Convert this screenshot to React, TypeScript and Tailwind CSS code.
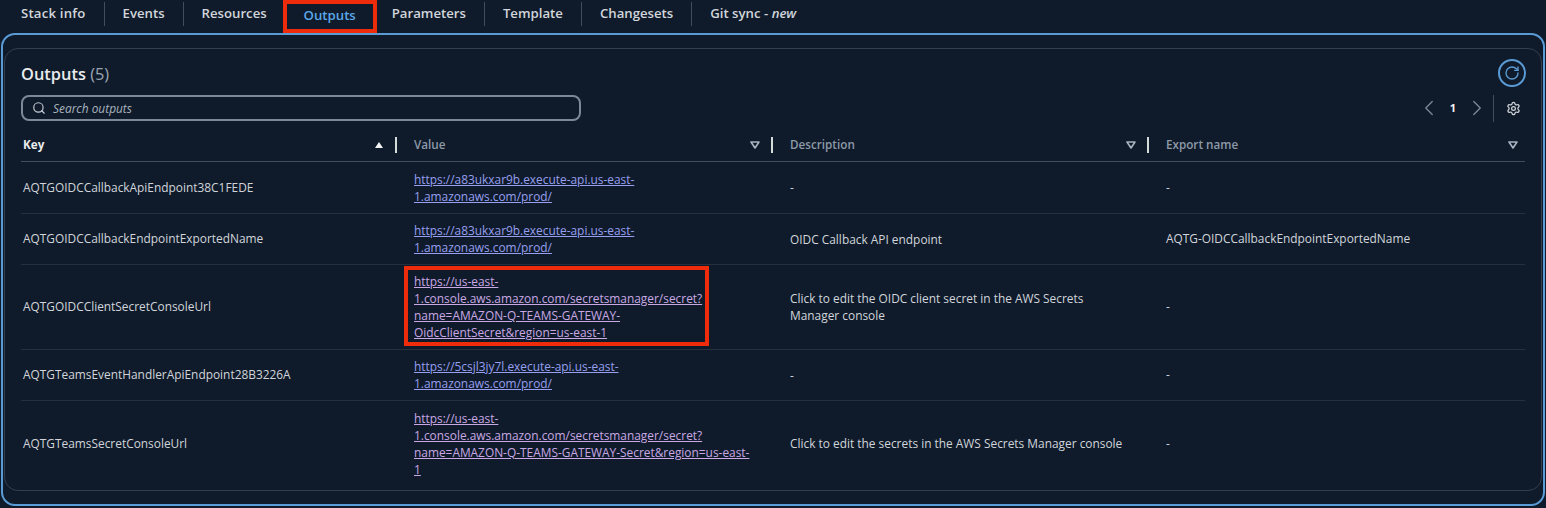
import React from "react";
import { ChevronLeft, ChevronRight, RotateCw, Search, Settings } from "lucide-react";

const tabs = ["Stack info", "Events", "Resources", "Outputs", "Parameters", "Template", "Changesets"];

const rows = [
  {
    key: "AQTGOIDCCallbackApiEndpoint38C1FEDE",
    value: ["https://a83ukxar9b.execute-api.us-east-", "1.amazonaws.com/prod/"],
    description: ["-"],
    exportName: "-",
    height: "h-[52px]",
  },
  {
    key: "AQTGOIDCCallbackEndpointExportedName",
    value: ["https://a83ukxar9b.execute-api.us-east-", "1.amazonaws.com/prod/"],
    description: ["OIDC Callback API endpoint"],
    exportName: "AQTG-OIDCCallbackEndpointExportedName",
    height: "h-[51px]",
  },
  {
    key: "AQTGOIDCClientSecretConsoleUrl",
    value: [
      "https://us-east-",
      "1.console.aws.amazon.com/secretsmanager/secret?",
      "name=AMAZON-Q-TEAMS-GATEWAY-",
      "OidcClientSecret&region=us-east-1",
    ],
    description: ["Click to edit the OIDC client secret in the AWS Secrets", "Manager console"],
    exportName: "-",
    height: "h-[85px]",
    visited: true,
    marked: true,
  },
  {
    key: "AQTGTeamsEventHandlerApiEndpoint28B3226A",
    value: ["https://5csjl3jy7l.execute-api.us-east-", "1.amazonaws.com/prod/"],
    description: ["-"],
    exportName: "-",
    height: "h-[51px]",
  },
  {
    key: "AQTGTeamsSecretConsoleUrl",
    value: [
      "https://us-east-",
      "1.console.aws.amazon.com/secretsmanager/secret?",
      "name=AMAZON-Q-TEAMS-GATEWAY-Secret&region=us-east-",
      "1",
    ],
    description: ["Click to edit the secrets in the AWS Secrets Manager console"],
    exportName: "-",
    height: "h-[85px]",
    visited: true,
    last: true,
  },
];

const FilterCaret = () => (
  <svg width="10" height="8" viewBox="0 0 10 8" className="text-[#a9b3bf]">
    <path d="M1 1h8L5 7z" fill="none" stroke="currentColor" strokeWidth="1.6" strokeLinejoin="round" />
  </svg>
);

const HeaderCell: React.FC<{ label: string; active?: boolean; divider?: boolean }> = ({ label, active, divider = true }) => (
  <div className={`flex items-center ${active ? "pl-[2px]" : ""}`}>
    <span className={active ? "font-bold text-[#e9ebed]" : "font-semibold text-[#8d99a8]"}>{label}</span>
    <span className="ml-auto flex items-center">
      {active ? (
        <svg width="10" height="8" viewBox="0 0 10 8" className="text-[#f2f3f3]">
          <path d="M5 1l4 6H1z" fill="currentColor" />
        </svg>
      ) : (
        <FilterCaret />
      )}
    </span>
    {divider ? <span className="ml-[11px] mr-[17px] h-[16px] w-[2px] bg-[#d5dbdb]" /> : <span className="w-[7px]" />}
  </div>
);

export default function App() {
  return (
    <div className="h-[508px] w-[1546px] overflow-hidden bg-[#0f1b2a] font-['Open_Sans',sans-serif] text-[11.9px] text-[#d1d5db]">
      <div className="flex h-[33px] items-center pl-[3px] text-[13.2px] font-semibold">
        {tabs.map((tab, i) =>
          tab === "Outputs" ? (
            <div
              key={tab}
              className="ml-[-2px] mr-[-3px] flex h-[33px] w-[94px] items-center justify-center border-[4px] border-[#ee2c0c] pb-[1px] text-[#5ba7e8]"
            >
              {tab}
            </div>
          ) : (
            <div key={tab} className="mb-[5px] flex h-[28px] items-center">
              <span className={`px-[18px] ${i === 0 ? "tracking-[0.2px]" : ""}`}>{tab}</span>
              {i !== 2 && <span className="h-[24px] w-px bg-[#414d5c]" />}
            </div>
          )
        )}
        <div className="mb-[5px] flex h-[28px] items-center px-[18px]">
          Git sync -&nbsp;<em>new</em>
        </div>
      </div>

      <div className="mx-px h-[473px] rounded-[14px] border-2 border-[#5b9bd5] px-px pt-[13px]">
        <div className="h-[443px] rounded-[14px] border border-[#353f4c] pl-[16px] pr-[16px]">
          <div className="flex h-[46px] items-center justify-between pt-[4px]">
            <h2 className="text-[16.4px] font-semibold text-[#e9ebed]">
              Outputs <span className="font-normal text-[#9aa5b1]">(5)</span>
            </h2>
            <button className="mr-[-1px] mt-[-2px] flex h-[28px] w-[28px] items-center justify-center rounded-full border-2 border-[#5b9bd5] text-[#5b9bd5]">
              <RotateCw size={16} strokeWidth={2} />
            </button>
          </div>

          <div className="flex h-[26px] items-center">
            <div className="flex h-[26px] w-[560px] items-center gap-[7px] rounded-[8px] border-2 border-[#7d8998] pl-[9px]">
              <Search size={14} strokeWidth={2} className="text-[#c6ccd4]" />
              <span className="pt-[1px] italic text-[#a9b3bf]">Search outputs</span>
            </div>
            <div className="ml-auto flex items-center text-[#7d8998]">
              <ChevronLeft size={26} strokeWidth={1.2} />
              <span className="mx-[8px] text-[11px] font-bold text-[#f2f3f3]">1</span>
              <ChevronRight size={26} strokeWidth={1.2} />
              <span className="ml-[3px] mr-[12px] h-[27px] w-px bg-[#414d5c]" />
              <Settings size={15} strokeWidth={2} className="mr-[4px] text-[#d1d5db]" />
            </div>
          </div>

          <div className="grid h-[41px] grid-cols-[393px_376px_376px_1fr] border-b border-[#414d5c] pb-[1px] pt-[8px] text-[11.7px]">
            <HeaderCell label="Key" active />
            <HeaderCell label="Value" />
            <HeaderCell label="Description" />
            <HeaderCell label="Export name" divider={false} />
          </div>

          {rows.map((row) => (
            <div
              key={row.key}
              className={`grid grid-cols-[391px_376px_376px_1fr] items-center pl-[2px] ${row.height} ${row.last ? "" : "border-b border-[#252f3d]"}`}
            >
              <div>{row.key}</div>
              <div className="relative leading-[17px]">
                {row.value.map((line) => (
                  <div key={line}>
                    <a href="#" className={`underline ${row.visited ? "text-[#c9a8e4]" : "text-[#979ff0]"}`}>
                      {line}
                    </a>
                  </div>
                ))}
                {row.marked && (
                  <div className="absolute left-[-10px] top-[-7px] h-[80px] w-[305px] border-[4px] border-[#ee2c0c]" />
                )}
              </div>
              <div className="leading-[17px]">
                {row.description.map((line) => (
                  <div key={line}>{line}</div>
                ))}
              </div>
              <div>{row.exportName}</div>
            </div>
          ))}
        </div>
      </div>
    </div>
  );
}
